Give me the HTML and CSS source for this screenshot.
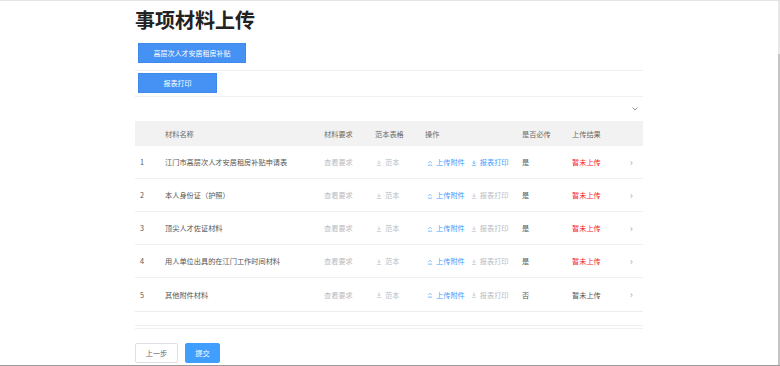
FILE: index.html
```html
<!DOCTYPE html>
<html lang="zh">
<head>
<meta charset="utf-8">
<link rel="stylesheet" href="styles.css">
</head>
<body>
<div class="page">
  <h1 class="title">事项材料上传</h1>
  <div class="tabrow first"><button class="tab wide">高层次人才安居租房补贴</button></div>
  <div class="tabrow"><button class="tab">报表打印</button></div>
  <div class="collapse"><svg class="chev-down" viewBox="0 0 6 4" width="6" height="4"><path d="M0.5 0.5 L3 3 L5.5 0.5" fill="none" stroke="#888" stroke-width="0.9"/></svg></div>

  <div class="table">
    <div class="row head">
      <div class="c"></div><div class="c">材料名称</div><div class="c">材料要求</div><div class="c">范本表格</div><div class="c">操作</div><div class="c">是否必传</div><div class="c">上传结果</div><div class="c"></div>
    </div>

    <div class="row">
      <div class="c">1</div><div class="c">江门市高层次人才安居租房补贴申请表</div><div class="c muted">查看要求</div>
      <div class="c muted"><svg class="ic" viewBox="0 0 7 7"><path d="M3.5 0.5V4.5M1.8 2.8L3.5 4.5L5.2 2.8M1 6.3H6" fill="none" stroke="currentColor" stroke-width="0.8"/></svg>范本</div>
      <div class="c ops"><span class="link"><svg class="ic" viewBox="0 0 7 7"><path d="M1.5 3.5L3.5 1.5L5.5 3.5M1 6H6" fill="none" stroke="currentColor" stroke-width="0.8"/></svg>上传附件</span><span class="link"><svg class="ic" viewBox="0 0 7 7"><path d="M3.5 0.5V4.5M1.8 2.8L3.5 4.5L5.2 2.8M1 6.3H6" fill="none" stroke="currentColor" stroke-width="0.8"/></svg>报表打印</span></div>
      <div class="c">是</div><div class="c red">暂未上传</div><div class="c arrow">›</div>
    </div>

    <div class="row">
      <div class="c">2</div><div class="c">本人身份证（护照）</div><div class="c muted">查看要求</div>
      <div class="c muted"><svg class="ic" viewBox="0 0 7 7"><path d="M3.5 0.5V4.5M1.8 2.8L3.5 4.5L5.2 2.8M1 6.3H6" fill="none" stroke="currentColor" stroke-width="0.8"/></svg>范本</div>
      <div class="c ops"><span class="link"><svg class="ic" viewBox="0 0 7 7"><path d="M1.5 3.5L3.5 1.5L5.5 3.5M1 6H6" fill="none" stroke="currentColor" stroke-width="0.8"/></svg>上传附件</span><span class="muted"><svg class="ic" viewBox="0 0 7 7"><path d="M3.5 0.5V4.5M1.8 2.8L3.5 4.5L5.2 2.8M1 6.3H6" fill="none" stroke="currentColor" stroke-width="0.8"/></svg>报表打印</span></div>
      <div class="c">是</div><div class="c red">暂未上传</div><div class="c arrow">›</div>
    </div>

    <div class="row">
      <div class="c">3</div><div class="c">顶尖人才佐证材料</div><div class="c muted">查看要求</div>
      <div class="c muted"><svg class="ic" viewBox="0 0 7 7"><path d="M3.5 0.5V4.5M1.8 2.8L3.5 4.5L5.2 2.8M1 6.3H6" fill="none" stroke="currentColor" stroke-width="0.8"/></svg>范本</div>
      <div class="c ops"><span class="link"><svg class="ic" viewBox="0 0 7 7"><path d="M1.5 3.5L3.5 1.5L5.5 3.5M1 6H6" fill="none" stroke="currentColor" stroke-width="0.8"/></svg>上传附件</span><span class="muted"><svg class="ic" viewBox="0 0 7 7"><path d="M3.5 0.5V4.5M1.8 2.8L3.5 4.5L5.2 2.8M1 6.3H6" fill="none" stroke="currentColor" stroke-width="0.8"/></svg>报表打印</span></div>
      <div class="c">是</div><div class="c red">暂未上传</div><div class="c arrow">›</div>
    </div>

    <div class="row">
      <div class="c">4</div><div class="c">用人单位出具的在江门工作时间材料</div><div class="c muted">查看要求</div>
      <div class="c muted"><svg class="ic" viewBox="0 0 7 7"><path d="M3.5 0.5V4.5M1.8 2.8L3.5 4.5L5.2 2.8M1 6.3H6" fill="none" stroke="currentColor" stroke-width="0.8"/></svg>范本</div>
      <div class="c ops"><span class="link"><svg class="ic" viewBox="0 0 7 7"><path d="M1.5 3.5L3.5 1.5L5.5 3.5M1 6H6" fill="none" stroke="currentColor" stroke-width="0.8"/></svg>上传附件</span><span class="muted"><svg class="ic" viewBox="0 0 7 7"><path d="M3.5 0.5V4.5M1.8 2.8L3.5 4.5L5.2 2.8M1 6.3H6" fill="none" stroke="currentColor" stroke-width="0.8"/></svg>报表打印</span></div>
      <div class="c">是</div><div class="c red">暂未上传</div><div class="c arrow">›</div>
    </div>

    <div class="row">
      <div class="c">5</div><div class="c">其他附件材料</div><div class="c muted">查看要求</div>
      <div class="c muted"><svg class="ic" viewBox="0 0 7 7"><path d="M3.5 0.5V4.5M1.8 2.8L3.5 4.5L5.2 2.8M1 6.3H6" fill="none" stroke="currentColor" stroke-width="0.8"/></svg>范本</div>
      <div class="c ops"><span class="link"><svg class="ic" viewBox="0 0 7 7"><path d="M1.5 3.5L3.5 1.5L5.5 3.5M1 6H6" fill="none" stroke="currentColor" stroke-width="0.8"/></svg>上传附件</span><span class="muted"><svg class="ic" viewBox="0 0 7 7"><path d="M3.5 0.5V4.5M1.8 2.8L3.5 4.5L5.2 2.8M1 6.3H6" fill="none" stroke="currentColor" stroke-width="0.8"/></svg>报表打印</span></div>
      <div class="c">否</div><div class="c">暂未上传</div><div class="c arrow">›</div>
    </div>
  </div>

  <div class="foot-lines"></div>

  <div class="actions">
    <button class="btn plain">上一步</button>
    <button class="btn primary">提交</button>
  </div>
</div>
<div class="scrollbar"><div class="thumb"></div></div>
</body>
</html>
```

FILE: styles.css
```css
* { box-sizing: border-box; }
html, body { margin: 0; padding: 0; }
body {
  width: 780px;
  height: 366px;
  overflow: hidden;
  background: #fff;
  font-family: "Noto Sans CJK SC", "Noto Sans", sans-serif;
  color: #555;
  border-top: 1px solid #e4e4e4;
  border-bottom: 1px solid #9a9a9a;
  position: relative;
}
.page {
  margin-left: 135px;
  width: 508px;
}
.title {
  margin: 0;
  padding-top: 7px;
  height: 42px;
  font-size: 20px;
  line-height: 24px;
  font-weight: 700;
  color: #222;
}
.tabrow {
  height: 24px;
  padding-left: 3px;
  border-bottom: 1px solid #f0f0f0;
}
.tabrow.first { height: 28px; }
.tab {
  display: block;
  height: 20px;
  width: 79px;
  padding: 0;
  border: 1px solid #3f88ec;
  background: #4592f4;
  color: #fff;
  font-family: inherit;
  font-size: 7px;
  line-height: 18px;
}
.tab.wide { width: 108px; }
.tabrow:not(.first) .tab { margin-top: 2px; }
.collapse {
  height: 24px;
  display: flex;
  justify-content: flex-end;
  align-items: flex-start;
  padding-right: 5px;
  padding-top: 10px;
}
.table {
  border-bottom: 1px solid #ededed;
}
.row {
  display: grid;
  grid-template-columns: 30px 159px 51px 50px 97px 50px 56px 15px;
  height: 33px;
  align-items: center;
  font-size: 7.2px;
  border-bottom: 1px solid #f0f0f0;
}
.row:last-child { border-bottom: none; }
.row.head {
  height: 25px;
  background: #f2f2f2;
  color: #6a6a6a;
  border-bottom: none;
}
.row .c:first-child { padding-left: 5px; }
.muted { color: #b8bcc4; }
.link { color: #409eff; }
.red { color: #f5222d; }
.arrow { color: #999; font-size: 9px; padding-left: 2px; }
.ops { display: flex; gap: 4px; white-space: nowrap; }
.ic {
  width: 6px;
  height: 6px;
  margin-right: 3px;
  vertical-align: -0.5px;
  margin-left: 2px;
}
.c.muted .ic { margin-left: 1px; }
.foot-lines {
  margin-top: 13px;
  height: 4px;
  border-top: 1px solid #efefef;
  border-bottom: 1px solid #efefef;
}
.actions {
  display: flex;
  gap: 7px;
  margin-top: 14px;
}
.btn {
  height: 20px;
  padding: 0;
  font-family: inherit;
  font-size: 7.2px;
  border-radius: 2px;
}
.btn.plain {
  width: 43px;
  background: #fff;
  border: 1px solid #dcdfe6;
  color: #666;
}
.btn.primary {
  width: 35px;
  background: #409eff;
  border: 1px solid #409eff;
  color: #fff;
}
.scrollbar {
  position: absolute;
  top: 0;
  right: 0;
  width: 2px;
  height: 366px;
  background: #e8e8e8;
}
.scrollbar .thumb {
  margin-top: 53px;
  height: 313px;
  background: #c4c4c4;
}
```
